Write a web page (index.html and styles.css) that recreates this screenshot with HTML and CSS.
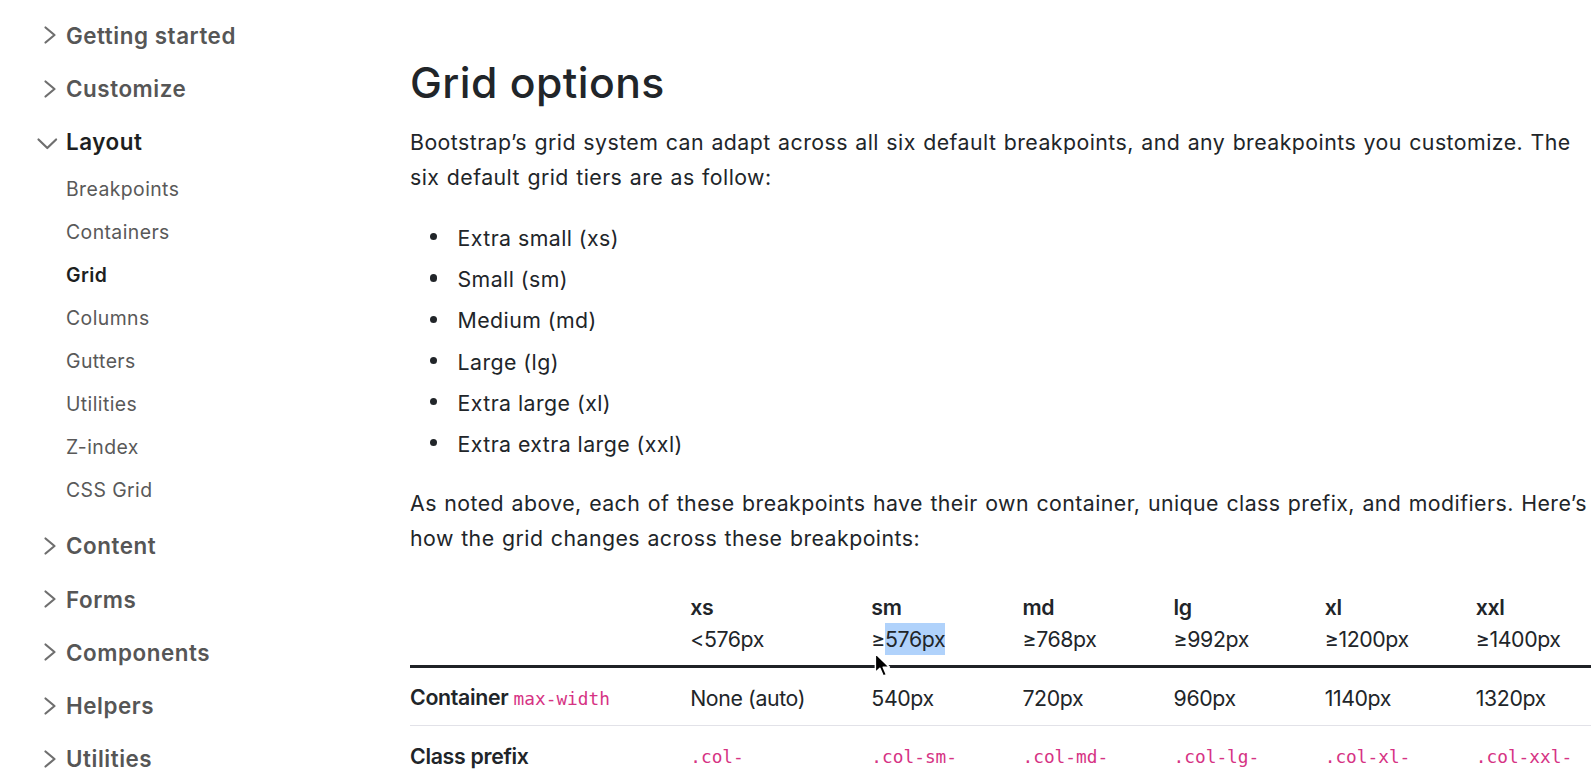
FILE: index.html
```html
<!DOCTYPE html>
<html lang="en">
<head>
<meta charset="utf-8">
<title>Grid options · Bootstrap</title>
<link rel="stylesheet" href="styles.css">
</head>
<body>
<div class="page">
  <nav class="sidebar">
    <ul class="nav">
      <li class="group">
        <div class="head"><svg class="chev" viewBox="0 0 22 22"><path d="M9.5 3.5 L18.5 11 L9.5 18.5"/></svg><span>Getting started</span></div>
      </li>
      <li class="group">
        <div class="head"><svg class="chev" viewBox="0 0 22 22"><path d="M9.5 3.5 L18.5 11 L9.5 18.5"/></svg><span>Customize</span></div>
      </li>
      <li class="group open">
        <div class="head active"><svg class="chev" viewBox="0 0 22 22"><path d="M2.5 8.5 L11.3 17 L20.1 8.5"/></svg><span>Layout</span></div>
        <ul class="sub">
          <li>Breakpoints</li>
          <li>Containers</li>
          <li class="current">Grid</li>
          <li>Columns</li>
          <li>Gutters</li>
          <li>Utilities</li>
          <li>Z-index</li>
          <li>CSS Grid</li>
        </ul>
      </li>
      <li class="group">
        <div class="head"><svg class="chev" viewBox="0 0 22 22"><path d="M9.5 3.5 L18.5 11 L9.5 18.5"/></svg><span>Content</span></div>
      </li>
      <li class="group">
        <div class="head"><svg class="chev" viewBox="0 0 22 22"><path d="M9.5 3.5 L18.5 11 L9.5 18.5"/></svg><span>Forms</span></div>
      </li>
      <li class="group">
        <div class="head"><svg class="chev" viewBox="0 0 22 22"><path d="M9.5 3.5 L18.5 11 L9.5 18.5"/></svg><span>Components</span></div>
      </li>
      <li class="group">
        <div class="head"><svg class="chev" viewBox="0 0 22 22"><path d="M9.5 3.5 L18.5 11 L9.5 18.5"/></svg><span>Helpers</span></div>
      </li>
      <li class="group">
        <div class="head"><svg class="chev" viewBox="0 0 22 22"><path d="M9.5 3.5 L18.5 11 L9.5 18.5"/></svg><span>Utilities</span></div>
      </li>
    </ul>
  </nav>

  <main class="content">
    <h2 class="title">Grid options</h2>
    <p class="text">Bootstrap’s grid system can adapt across all six default breakpoints, and any breakpoints you customize. The six default grid tiers are as follow:</p>
    <ul class="tiers">
      <li>Extra small (xs)</li>
      <li>Small (sm)</li>
      <li>Medium (md)</li>
      <li>Large (lg)</li>
      <li>Extra large (xl)</li>
      <li>Extra extra large (xxl)</li>
    </ul>
    <p class="text">As noted above, each of these breakpoints have their own container, unique class prefix, and modifiers. Here’s how the grid changes across these breakpoints:</p>

    <table class="grid-table">
      <colgroup>
        <col class="c-label">
        <col class="c-xs">
        <col class="c-bp">
        <col class="c-bp">
        <col class="c-bp">
        <col class="c-bp">
        <col class="c-last">
      </colgroup>
      <thead>
        <tr>
          <th></th>
          <th>xs<br><span class="thin">&lt;576px</span></th>
          <th>sm<br><span class="thin">≥<span class="sel">576px</span></span></th>
          <th>md<br><span class="thin">≥768px</span></th>
          <th>lg<br><span class="thin">≥992px</span></th>
          <th>xl<br><span class="thin">≥1200px</span></th>
          <th>xxl<br><span class="thin">≥1400px</span></th>
        </tr>
      </thead>
      <tbody>
        <tr>
          <th>Container <code>max-width</code></th>
          <td>None (auto)</td>
          <td>540px</td>
          <td>720px</td>
          <td>960px</td>
          <td>1140px</td>
          <td>1320px</td>
        </tr>
        <tr>
          <th>Class prefix</th>
          <td><code>.col-</code></td>
          <td><code>.col-sm-</code></td>
          <td><code>.col-md-</code></td>
          <td><code>.col-lg-</code></td>
          <td><code>.col-xl-</code></td>
          <td><code>.col-xxl-</code></td>
        </tr>
      </tbody>
    </table>
  </main>

  <svg class="cursor" viewBox="0 0 15 23" width="17" height="26">
    <path d="M1.2 1.2 L1.2 18.2 L5.2 14.4 L8.2 21.2 L11 20 L8.1 13.4 L13.6 13.4 Z" fill="#000" stroke="#fff" stroke-width="1.3" stroke-linejoin="round"/>
  </svg>
</div>
</body>
</html>
```

FILE: styles.css
```css
* { box-sizing: border-box; }

html, body {
  margin: 0;
  padding: 0;
  background: #fff;
}

body {
  font-family: Inter, "Noto Sans", "Liberation Sans", sans-serif;
  color: #212529;
  width: 1591px;
  height: 780px;
  overflow: hidden;
}

.page {
  position: relative;
  display: grid;
  grid-template-columns: 410px 1181px;
  width: 1591px;
  height: 780px;
  overflow: hidden;
}

/* ---------- sidebar ---------- */
.sidebar {
  padding-top: 8.6px;
}

.nav, .sub {
  list-style: none;
  margin: 0;
  padding: 0;
}

.head {
  display: flex;
  align-items: center;
  height: 53.3px;
  padding-left: 36px;
  gap: 8px;
  font-size: 22.4px;
  font-weight: 600;
  letter-spacing: 0.55px;
  color: #565656;
  white-space: nowrap;
}

.head.active {
  color: #1d1f21;
}

.chev {
  width: 22px;
  height: 22px;
  flex: none;
}

.chev path {
  fill: none;
  stroke: #6f6f6f;
  stroke-width: 2.2;
  stroke-linecap: round;
  stroke-linejoin: round;
}

.sub {
  margin-bottom: 6.6px;
}

.sub li {
  height: 43px;
  line-height: 43px;
  padding-left: 66px;
  font-size: 19.4px;
  letter-spacing: 0.42px;
  color: #595959;
}

.sub li.current {
  font-weight: 600;
  color: #1d1f21;
}

/* ---------- content ---------- */
.content {
  padding-top: 57.4px;
  min-width: 0;
}

.title {
  margin: 0 0 16.4px;
  font-size: 42.7px;
  line-height: 51.2px;
  font-weight: 500;
  color: #212529;
  letter-spacing: 0.45px;
}

.text {
  margin: 0;
  font-size: 21.3px;
  line-height: 35px;
  letter-spacing: 0.45px;
  word-spacing: 1px;
  width: 1195px;
}

.tiers {
  margin: 26px 0 23.8px;
  padding-left: 47.5px;
  list-style: none;
  font-size: 21.3px;
  line-height: 35px;
  letter-spacing: 0.45px;
}

.tiers li::before {
  content: "";
  display: inline-block;
  width: 7.2px;
  height: 7.2px;
  border-radius: 50%;
  background: #212529;
  margin-left: -27.3px;
  margin-right: 20.1px;
  vertical-align: 0.26em;
}

.tiers li + li {
  margin-top: 6.2px;
}

/* ---------- table ---------- */
.grid-table {
  margin-top: 23.2px;
  border-collapse: collapse;
  table-layout: fixed;
  width: 1226px;
  font-size: 21.3px;
  line-height: 32.5px;
  letter-spacing: -0.4px;
  text-align: left;
}

.c-label { width: 280px; }
.c-xs { width: 181px; }
.c-bp { width: 151px; }
.c-last { width: 160px; }

.grid-table thead th {
  padding: 12px 0 9.5px;
  font-weight: 600;
  vertical-align: bottom;
  border-bottom: 3px solid #1f2226;
}

.thin {
  font-weight: 400;
}

.sel {
  background: #b0d2fb;
  padding: 3px 0;
}

.grid-table tbody th,
.grid-table tbody td {
  padding: 12.5px 0 10px;
  border-bottom: 1px solid #e2e2e8;
  white-space: nowrap;
}

.grid-table tbody th {
  font-weight: 600;
  letter-spacing: -0.3px;
}

.grid-table tbody td {
  font-weight: 400;
}

code {
  font-family: "DejaVu Sans Mono", "Liberation Mono", monospace;
  font-size: 17.8px;
  color: #d63384;
  font-weight: 400;
  letter-spacing: 0;
}

/* mouse pointer overlay */
.cursor {
  position: absolute;
  left: 874px;
  top: 652px;
}
```
